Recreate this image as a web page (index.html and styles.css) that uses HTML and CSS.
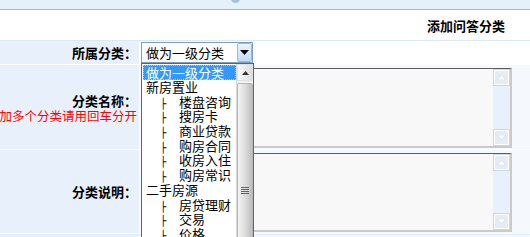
FILE: index.html
```html
<!DOCTYPE html>
<html lang="zh-CN">
<head>
<meta charset="utf-8">
<title>添加问答分类</title>
<link rel="stylesheet" href="styles.css">
</head>
<body>
<div class="page">
  <div class="topbar"><span class="topicon"></span></div>
  <div class="header"><h2 class="title">添加问答分类</h2></div>
  <div class="form">
    <div class="row row-select">
      <div class="label">所属分类：</div>
      <div class="field field-white">
        <div class="select">
          <span class="select-text">做为一级分类</span>
          <span class="select-btn"><svg width="9" height="5" viewBox="0 0 9 5"><path d="M0 0H9L4.5 5Z" fill="#000"/></svg></span>
        </div>
      </div>
    </div>
    <div class="row row-name">
      <div class="label label-stack"><span>分类名称：</span><span class="hint">添加多个分类请用回车分开</span></div>
      <div class="field">
        <div class="textarea">
          <div class="ta-body"></div>
          <div class="ta-scroll">
            <span class="ta-btn"><svg width="9" height="5" viewBox="0 0 9 5"><path d="M0 5H9L4.5 0Z" fill="#fff" stroke="#c9d3de" stroke-width="0.6"/></svg></span>
            <span class="ta-btn"><svg width="9" height="5" viewBox="0 0 9 5"><path d="M0 0H9L4.5 5Z" fill="#fff" stroke="#c9d3de" stroke-width="0.6"/></svg></span>
          </div>
        </div>
      </div>
    </div>
    <div class="row row-desc">
      <div class="label">分类说明：</div>
      <div class="field">
        <div class="textarea textarea-2">
          <div class="ta-body"></div>
          <div class="ta-scroll">
            <span class="ta-btn"><svg width="9" height="5" viewBox="0 0 9 5"><path d="M0 5H9L4.5 0Z" fill="#fff" stroke="#c9d3de" stroke-width="0.6"/></svg></span>
            <span class="ta-btn"><svg width="9" height="5" viewBox="0 0 9 5"><path d="M0 0H9L4.5 5Z" fill="#fff" stroke="#c9d3de" stroke-width="0.6"/></svg></span>
          </div>
        </div>
      </div>
    </div>
    <div class="row row-more">
      <div class="label"></div>
      <div class="field"></div>
    </div>
  </div>

  <div class="dropdown">
    <ul class="options">
      <li class="opt selected">做为一级分类</li>
      <li class="opt">新房置业</li>
      <li class="opt child"><span class="tee">├</span>楼盘咨询</li>
      <li class="opt child"><span class="tee">├</span>搜房卡</li>
      <li class="opt child"><span class="tee">├</span>商业贷款</li>
      <li class="opt child"><span class="tee">├</span>购房合同</li>
      <li class="opt child"><span class="tee">├</span>收房入住</li>
      <li class="opt child"><span class="tee">├</span>购房常识</li>
      <li class="opt">二手房源</li>
      <li class="opt child"><span class="tee">├</span>房贷理财</li>
      <li class="opt child"><span class="tee">├</span>交易</li>
      <li class="opt child"><span class="tee">├</span>价格</li>
      <li class="opt child"><span class="tee">├</span>税费</li>
    </ul>
    <div class="dd-scroll">
      <span class="dd-btn"><svg width="7" height="4" viewBox="0 0 7 4"><path d="M0 4H7L3.5 0Z" fill="#333"/></svg></span>
      <div class="dd-thumb"><span class="grip"></span></div>
    </div>
  </div>
</div>
</body>
</html>
```

FILE: styles.css
```css
html, body {
  margin: 0;
  padding: 0;
  background: #fff;
}
body {
  font-family: "Noto Sans CJK SC", "Noto Sans", sans-serif;
  font-size: 13px;
  color: #000;
  overflow: hidden;
}
.page {
  position: relative;
  width: 530px;
  height: 237px;
  overflow: hidden;
}
.topbar {
  position: relative;
  height: 9px;
  background: #e4f0fa;
  border-bottom: 1px solid #8fc2c8;
  overflow: hidden;
}
.topicon {
  position: absolute;
  left: 231px;
  top: -6px;
  width: 9px;
  height: 9px;
  border-radius: 50%;
  background: #aac0d8;
}
.header {
  height: 30px;
  border-bottom: 1px solid #d8eaf6;
  display: flex;
  justify-content: flex-end;
  align-items: center;
  padding-right: 25px;
}
.title {
  margin: 0;
  font-size: 13px;
  font-weight: bold;
  line-height: 15px;
  padding-top: 1px;
}
.form {
  display: flex;
  flex-direction: column;
  gap: 1px;
  background: #fff;
}
.row {
  display: grid;
  grid-template-columns: 139px 1fr;
  column-gap: 1px;
}
.row-select { height: 23px; }
.row-name { height: 84px; }
.row-desc { height: 83px; }
.row-more { height: 20px; border-top: 1px solid #dcecf8; }
.label {
  background: #e8f1fb;
  display: flex;
  justify-content: flex-end;
  align-items: center;
  padding-right: 2px;
  font-weight: bold;
  white-space: nowrap;
  line-height: 15px;
}
.label-stack {
  flex-direction: column;
  align-items: flex-end;
  justify-content: center;
  padding-top: 1px;
}
.hint {
  color: #f00;
  font-weight: normal;
  font-size: 12.5px;
  padding-right: 0;
}
.field {
  background: #f5f8fd;
  display: flex;
  align-items: center;
  padding-left: 7px;
}
.field-white {
  background: #fff;
  padding-left: 1px;
  align-items: flex-start;
  padding-top: 1px;
}
.select {
  width: 112px;
  height: 21px;
  box-sizing: border-box;
  border: 1px solid #7f9db9;
  background: #fff;
  display: flex;
  align-items: center;
}
.select-text {
  flex: 1;
  padding-left: 4px;
  line-height: 15px;
}
.select-btn {
  width: 15px;
  height: 19px;
  box-sizing: border-box;
  border: 1px solid #9dbbd6;
  border-radius: 2px;
  background: linear-gradient(#eaf4fd, #bcdcf5);
  display: flex;
  align-items: center;
  justify-content: center;
}
.textarea {
  width: 365px;
  height: 80px;
  box-sizing: border-box;
  border-top: 1px solid #5e5e5e;
  border-left: 1px solid #5e5e5e;
  border-right: 2px solid #cacaca;
  border-bottom: 2px solid #cacaca;
  display: flex;
  margin-top: 2px;
}
.textarea-2 {
  height: 79px;
}
.ta-body {
  flex: 1;
  background: #f8f8f8;
}
.ta-scroll {
  width: 17px;
  background: #e8f0fb;
  display: flex;
  flex-direction: column;
  justify-content: space-between;
}
.ta-btn {
  width: 17px;
  height: 17px;
  box-sizing: border-box;
  border: 1px solid #cfd6de;
  box-shadow: inset 1px 1px 0 #fff, inset -1px -1px 0 #fff;
  background: #e4ecf6;
  display: flex;
  align-items: center;
  justify-content: center;
}
.dropdown {
  position: absolute;
  left: 141px;
  top: 63px;
  width: 113px;
  height: 190px;
  box-sizing: border-box;
  border: 1px solid #646464;
  background: #fff;
  display: flex;
}
.options {
  list-style: none;
  margin: 0;
  padding: 1px 0 0 1px;
  flex: 1;
  overflow: hidden;
}
.opt {
  height: 14.7px;
  line-height: 14.7px;
  padding-left: 3px;
  white-space: nowrap;
  box-sizing: border-box;
}
.opt.selected {
  background: #3399ff;
  color: #fff;
  outline: 1px dotted #f0b060;
  outline-offset: -1px;
  height: 15px;
  line-height: 15px;
}
.opt.child {
  padding-left: 17px;
}
.tee {
  display: inline-block;
  width: 19px;
  font-family: "DejaVu Sans", sans-serif;
  font-size: 10px;
  line-height: 10px;
  vertical-align: 0;
  color: #000;
}
.dd-scroll {
  width: 16px;
  background: #f2f2f2;
  display: flex;
  flex-direction: column;
  border-left: 1px solid #d8d8d8;
}
.dd-btn {
  height: 17px;
  box-sizing: border-box;
  border: 1px solid #e0e0e0;
  background: linear-gradient(90deg, #fafafa, #dcdcdc);
  display: flex;
  align-items: center;
  justify-content: center;
}
.dd-thumb {
  margin-top: 2px;
  flex: 1;
  border: 1px solid #b8b8b8;
  border-radius: 2px;
  background: linear-gradient(90deg, #f4f4f4, #d8d8d8 60%, #bdbdbd);
  position: relative;
}
.grip {
  position: absolute;
  left: 3px;
  top: 103px;
  width: 8px;
  height: 7px;
  background: repeating-linear-gradient(#666 0 1px, transparent 1px 2px);
}
```
